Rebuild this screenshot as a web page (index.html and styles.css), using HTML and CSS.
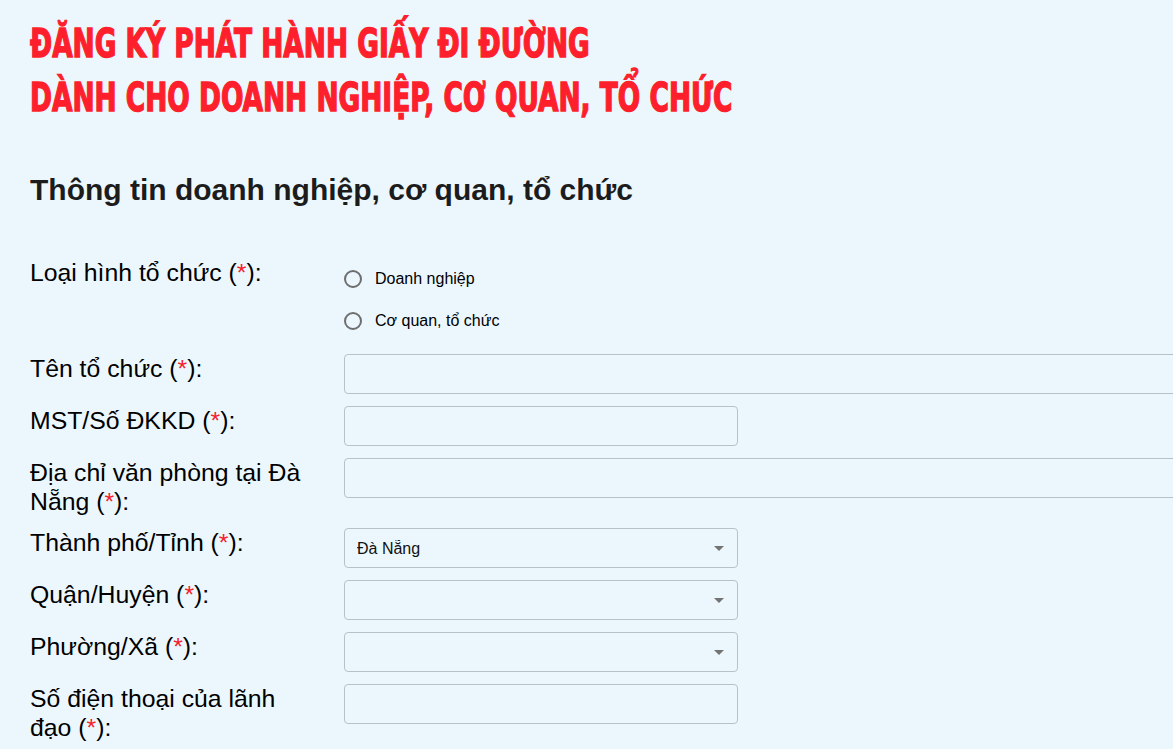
FILE: index.html
```html
<!DOCTYPE html>
<html>
<head>
    <meta charset="UTF-8" />
    <title>Đăng ký phát hành giấy đi đường</title>
    <link rel="stylesheet" href="styles.css">
</head>
<body>
    <div id="page">
        <h1 class="title">ĐĂNG KÝ PHÁT HÀNH GIẤY ĐI ĐƯỜNG<br>DÀNH CHO DOANH NGHIỆP, CƠ QUAN, TỔ CHỨC</h1>
        <h2 class="section">Thông tin doanh nghiệp, cơ quan, tổ chức</h2>

        <div class="form">
            <div class="row">
                <label class="lbl">Loại hình tổ chức (<span class="req">*</span>):</label>
                <div class="radios">
                    <label class="opt"><input type="radio" name="type" value="dn"> Doanh nghiệp</label>
                    <label class="opt"><input type="radio" name="type" value="cq"> Cơ quan, tổ chức</label>
                </div>
            </div>
            <div class="row">
                <label class="lbl">Tên tổ chức (<span class="req">*</span>):</label>
                <input type="text" class="txt wide">
            </div>
            <div class="row">
                <label class="lbl">MST/Số ĐKKD (<span class="req">*</span>):</label>
                <input type="text" class="txt">
            </div>
            <div class="row">
                <label class="lbl">Địa chỉ văn phòng tại Đà Nẵng (<span class="req">*</span>):</label>
                <input type="text" class="txt wide">
            </div>
            <div class="row">
                <label class="lbl">Thành phố/Tỉnh (<span class="req">*</span>):</label>
                <div class="sel">
                    <select>
                        <option>Đà Nẵng</option>
                    </select>
                </div>
            </div>
            <div class="row">
                <label class="lbl">Quận/Huyện (<span class="req">*</span>):</label>
                <div class="sel">
                    <select>
                        <option></option>
                    </select>
                </div>
            </div>
            <div class="row">
                <label class="lbl">Phường/Xã (<span class="req">*</span>):</label>
                <div class="sel">
                    <select>
                        <option></option>
                    </select>
                </div>
            </div>
            <div class="row">
                <label class="lbl">Số điện thoại của lãnh đạo (<span class="req">*</span>):</label>
                <input type="text" class="txt">
            </div>
        </div>
    </div>
</body>
</html>
```

FILE: styles.css
```css
*{ margin:0; padding:0; box-sizing:border-box;}
html,body{ overflow:hidden;}
body{
    background: #ecf7fd;
    color: #000;
    font-family: "Liberation Sans", Arial, sans-serif;
}
#page{
    padding: 17px 0 0 30px;
}
/* chữ tiêu đề: font đậm, hẹp */
.title{
    font-family: "DejaVu Sans Condensed", "Liberation Sans", sans-serif;
    font-weight: bold;
    font-size: 39px;
    line-height: 54px;
    color: #fd1f2b;
    -webkit-text-stroke: 1.4px #fd1f2b;
    white-space: nowrap;
    transform: scaleX(.753);
    transform-origin: left top;
}
.section{
    margin: 47px 0 50px;
    font-size: 30px;
    line-height: 36px;
    font-weight: bold;
    color: #1c1c1c;
}
.row{
    display: flex;
    align-items: flex-start;
    margin-bottom: 12px;
}
.lbl{
    flex: 0 0 280px;
    margin-right: 34px;
    font-size: 24.8px;
    line-height: 29px;
}
.req{
    color: #f5222d;
}
.radios{
    display: flex;
    flex-direction: column;
}
.opt{
    display: flex;
    align-items: center;
    height: 42px;
    font-size: 16px;
}
.opt input{
    appearance: none;
    -webkit-appearance: none;
    width: 18px;
    height: 18px;
    margin: 0 13px 0 0;
    border: 2px solid #6e6e6e;
    border-radius: 50%;
    background: transparent;
}
.txt{
    display: block;
    width: 394px;
    height: 40px;
    border: 1px solid #b7c1c8;
    border-radius: 4px;
    background: transparent;
    outline: none;
    padding: 0 12px;
    font-size: 16px;
}
.txt.wide{
    flex: 0 0 900px;
    width: 900px;
}
.sel{
    position: relative;
    width: 394px;
}
.sel select{
    appearance: none;
    -webkit-appearance: none;
    display: block;
    width: 100%;
    height: 40px;
    border: 1px solid #b7c1c8;
    border-radius: 4px;
    background: transparent;
    outline: none;
    padding: 0 12px;
    font-family: "Liberation Sans", Arial, sans-serif;
    font-size: 16px;
    color: #111;
}
.sel::after{
    content: "";
    position: absolute;
    right: 14px;
    top: 18px;
    border-left: 5px solid transparent;
    border-right: 5px solid transparent;
    border-top: 5px solid #737373;
    pointer-events: none;
}
```
